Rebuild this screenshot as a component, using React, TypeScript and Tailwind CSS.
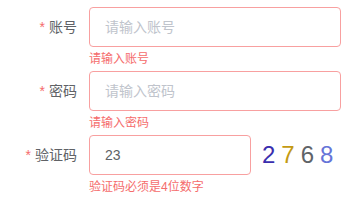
const font = { fontFamily: '"Liberation Sans", "Noto Sans CJK SC", sans-serif' }

type Field = {
  label: string
  placeholder: string
  value?: string
  error: string
  captcha?: boolean
}

const fields: Field[] = [
  { label: "账号", placeholder: "请输入账号", error: "请输入账号" },
  { label: "密码", placeholder: "请输入密码", error: "请输入密码" },
  { label: "验证码", placeholder: "请输入验证码", value: "23", error: "验证码必须是4位数字", captcha: true },
]

const digits = [
  { d: "2", c: "text-[#3a2eae]" },
  { d: "7", c: "text-[#c49a12]" },
  { d: "6", c: "text-[#5f6468]" },
  { d: "8", c: "text-[#6674d8]" },
]

export default function App() {
  return (
    <div className="w-[356px] h-[200px] bg-white pt-[7px] overflow-hidden" style={font}>
      {fields.map((f) => (
        <div key={f.label} className="flex">
          <label className="w-[89px] shrink-0 pr-3 text-right text-sm leading-10 text-[#606266]">
            <span className="text-[#f56c6c] mr-1">*</span>
            {f.label}
          </label>
          <div className="flex flex-col">
            <div className="flex items-center">
              <input
                defaultValue={f.value}
                placeholder={f.placeholder}
                className={`h-10 ${f.captcha ? "w-[162px]" : "w-[252px]"} rounded border border-[#f8a0a0] px-[15px] text-sm text-[#606266] placeholder:text-[#c0c4cc] outline-none`}
              />
              {f.captcha && (
                <div className="ml-[11px] flex gap-[6px] text-[24px] leading-none">
                  {digits.map((x, i) => (
                    <span key={i} className={x.c}>
                      {x.d}
                    </span>
                  ))}
                </div>
              )}
            </div>
            <div className="h-6 pt-[6px] text-xs leading-none text-[#f56c6c]">{f.error}</div>
          </div>
        </div>
      ))}
    </div>
  )
}
